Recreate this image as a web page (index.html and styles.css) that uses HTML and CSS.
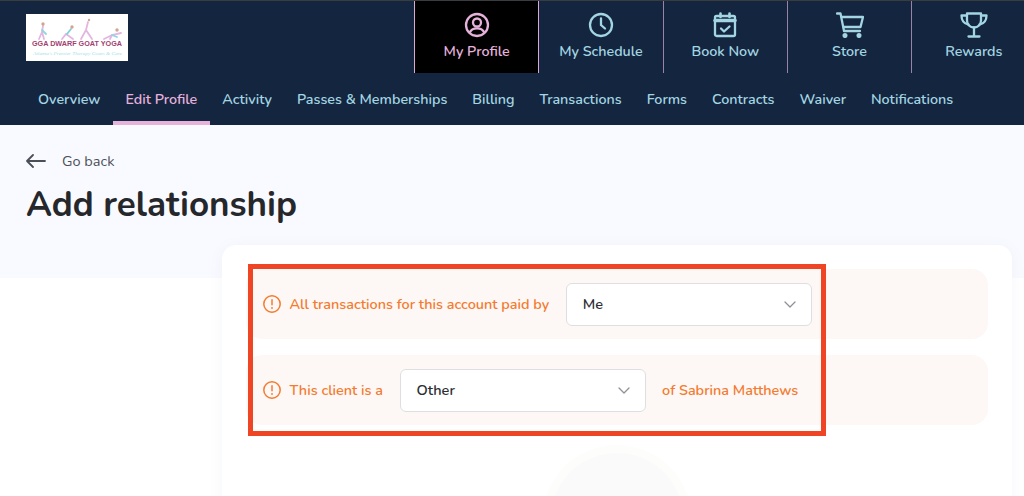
FILE: index.html
```html
<!DOCTYPE html>
<html lang="en">
<head>
<meta charset="utf-8">
<title>Add relationship</title>
<link rel="stylesheet" href="styles.css">
</head>
<body>
<header class="header">
  <div class="top">
    <a class="logo">
      <svg class="logo-art" width="102" height="47" viewBox="0 0 102 47">
        <rect width="102" height="47" fill="#fff"/>
        <g fill="none" stroke-linecap="round" stroke-width="1.800">
          <path d="M17 12 L16 18 L18 25 M16 18 L13 25" stroke="#e3b6e0"/>
          <path d="M16 16 L20 20" stroke="#8fd6de"/>
          <path d="M36 25 L40 20 L47 25" stroke="#e3b6e0"/>
          <path d="M41 20 L45 15" stroke="#7fcfd8"/>
          <path d="M62 8 L60 16 L55 25 M60 16 L66 25" stroke="#e3b6e0"/>
          <path d="M78 25 L86 21 L95 19 M86 21 L84 25" stroke="#e3b6e0"/>
          <path d="M86 21 L91 23" stroke="#8fd6de"/>
        </g>
        <g fill="#d3a590">
          <circle cx="17" cy="10" r="1.700"/><circle cx="46" cy="13" r="1.700"/><circle cx="63" cy="6" r="1.200"/><circle cx="91" cy="16" r="1.700"/>
        </g>
        <text class="logo-title" x="6" y="32" textLength="90" lengthAdjust="spacingAndGlyphs">GGA DWARF GOAT YOGA</text>
        <text class="logo-sub" x="7" y="41" textLength="89" lengthAdjust="spacingAndGlyphs">Atlanta's Premier Therapy Goats &amp; Care</text>
      </svg>
    </a>
    <nav class="tabs">
      <a class="tab tab-active">
        <svg class="tab-icon" viewBox="0 0 26 26" fill="none" stroke="currentColor" stroke-width="2.300"><circle cx="13" cy="13" r="11"/><circle cx="13" cy="10.500" r="4"/><path d="M5.800 20.500c1.200-3 4-4.200 7.200-4.200s6 1.200 7.200 4.200"/></svg>
        <span>My Profile</span>
      </a>
      <a class="tab">
        <svg class="tab-icon" viewBox="0 0 26 26" fill="none" stroke="currentColor" stroke-width="2.300" stroke-linecap="round"><circle cx="13" cy="13" r="11"/><path d="M13 6.500V13l4 3.500"/></svg>
        <span>My Schedule</span>
      </a>
      <a class="tab">
        <svg class="tab-icon" viewBox="0 0 26 26" fill="none" stroke="currentColor" stroke-width="2.300" stroke-linecap="round" stroke-linejoin="round"><rect x="3" y="4" width="20" height="20" rx="1.500"/><path d="M3 8.500h20" stroke-width="3.500"/><path d="M8.500 1.500V5M17.500 1.500V5" stroke-width="2.600"/><path d="M9 16.500l3 3 5.500-5"/></svg>
        <span>Book Now</span>
      </a>
      <a class="tab">
        <svg class="tab-icon tab-icon-wide" viewBox="0 0 28 26" fill="none" stroke="currentColor" stroke-width="2.300" stroke-linecap="round" stroke-linejoin="round"><path d="M1 1.500h3.500L8 19h16"/><path d="M5.500 5H27l-2.500 10H7.500"/><circle cx="9" cy="23.500" r="1.400" fill="currentColor"/><circle cx="23" cy="23.500" r="1.400" fill="currentColor"/></svg>
        <span>Store</span>
      </a>
      <a class="tab">
        <svg class="tab-icon tab-icon-wide" viewBox="0 0 28 26" fill="none" stroke="currentColor" stroke-width="2.300" stroke-linecap="round" stroke-linejoin="round"><path d="M7 1.500h14v7c0 4-3 7-7 7s-7-3-7-7z"/><path d="M7 3.500H1.500c0 5 1.500 8 7 9M21 3.500h5.500c0 5-1.500 8-7 9"/><path d="M14 15.500V24M8.500 24.500h11"/></svg>
        <span>Rewards</span>
      </a>
    </nav>
  </div>
  <nav class="subnav">
    <a class="subnav-item">Overview</a>
    <a class="subnav-item subnav-active">Edit Profile</a>
    <a class="subnav-item">Activity</a>
    <a class="subnav-item">Passes &amp; Memberships</a>
    <a class="subnav-item">Billing</a>
    <a class="subnav-item">Transactions</a>
    <a class="subnav-item">Forms</a>
    <a class="subnav-item">Contracts</a>
    <a class="subnav-item">Waiver</a>
    <a class="subnav-item">Notifications</a>
  </nav>
</header>
<section class="hero">
  <a class="back">
    <svg width="20" height="14" viewBox="0 0 20 14" fill="none" stroke="#4b4f57" stroke-width="1.800" stroke-linecap="round" stroke-linejoin="round"><path d="M1 7h18M7 1L1 7l6 6"/></svg>
    <span>Go back</span>
  </a>
  <h1 class="title">Add relationship</h1>
</section>
<main class="card">
  <div class="notice">
    <svg class="alert" viewBox="0 0 18 18" fill="none" stroke="#f47b2f" stroke-width="1.500" stroke-linecap="round"><circle cx="9" cy="9" r="8.200"/><path d="M9 4.800v5"/><path d="M9 13v.1" stroke-width="1.800"/></svg>
    <span>All transactions for this account paid by</span>
    <div class="select"><span>Me</span><svg class="chev" viewBox="0 0 12 7" fill="none" stroke="#8d9096" stroke-width="1.300" stroke-linecap="round" stroke-linejoin="round"><path d="M1 1l5 5 5-5"/></svg></div>
  </div>
  <div class="notice">
    <svg class="alert" viewBox="0 0 18 18" fill="none" stroke="#f47b2f" stroke-width="1.500" stroke-linecap="round"><circle cx="9" cy="9" r="8.200"/><path d="M9 4.800v5"/><path d="M9 13v.1" stroke-width="1.800"/></svg>
    <span>This client is a</span>
    <div class="select"><span>Other</span><svg class="chev" viewBox="0 0 12 7" fill="none" stroke="#8d9096" stroke-width="1.300" stroke-linecap="round" stroke-linejoin="round"><path d="M1 1l5 5 5-5"/></svg></div>
    <span>of Sabrina Matthews</span>
  </div>
  <div class="avatar-ring"><div class="avatar"></div></div>
  <div class="highlight"></div>
</main>
</body>
</html>
```
FILE: styles.css
```css
* { box-sizing: border-box; }
html, body { margin: 0; height: 496px; overflow: hidden; background: #fff; }
body { font-family: "Nunito", "Lato", "Noto Sans", sans-serif; color: #25272b; }
.header { background: #14253f; border-top: 1px solid #3a3d40; overflow: hidden; }
.top { display: flex; height: 72px; }
.logo { margin: 13px 0 0 26px; width: 102px; height: 47px; flex: none; }
.logo-art { display: block; }
.logo-title { font: 700 7px "Liberation Sans", sans-serif; fill: #a23e72; }
.logo-sub { font: italic 5px "Liberation Serif", serif; fill: #a5dfea; }
.tabs { display: flex; margin-left: 286px; flex: none; }
.tab { width: 124.300px; display: flex; flex-direction: column; align-items: center; border-left: 1px solid #9a83a6; color: #a3d5e2; font-size: 14.300px; font-weight: 600; padding-top: 11px; gap: 4px; line-height: 20px; }
.tab-icon { width: 26px; height: 26px; }
.tab-icon-wide { width: 28px; }
.tab-active { background: #000; color: #e6b2dc; border-left-color: #dba8d3; }
.tab-active + .tab { border-left-color: #dba8d3; }
.subnav { display: flex; height: 52px; padding-left: 25.500px; }
.subnav-item { padding: 2px 12.500px 0; color: #a3d5e2; font-size: 14.300px; font-weight: 600; line-height: 50px; height: 52px; }
.subnav-active { color: #e6b2dc; border-bottom: 4px solid #e6b2dc; }
.hero { height: 153px; background: #f9faff; padding: 26px 26px 0; }
.back { display: flex; align-items: center; gap: 16px; color: #4b4f57; font-size: 14.500px; line-height: 20px; }
.title { margin: 11px 0 0; font-size: 35px; line-height: 46px; font-weight: 700; color: #25272b; }
.card { position: relative; margin: -33px 12px 0 222px; height: 300px; padding: 24px; background: #fff; border-radius: 14px; box-shadow: 0 2px 14px rgba(120, 130, 170, .07); display: flex; flex-direction: column; gap: 16px; }
.notice { height: 70px; flex: none; display: flex; align-items: center; gap: 16.500px; padding: 0 17px; background: #fdf8f5; border-radius: 16px; color: #f47b2f; font-size: 14.400px; font-weight: 600; }
.notice .alert + span { margin-left: -8px; }
.alert { width: 18px; height: 18px; flex: none; }
.select { width: 246px; height: 43px; flex: none; display: flex; align-items: center; justify-content: space-between; padding: 0 15px 0 16px; background: #fff; border: 1.500px solid #dfdfe2; border-radius: 6px; color: #2c2e33; font-size: 14.500px; }
.chev { width: 12px; height: 7px; }
.avatar-ring { width: 148px; height: 148px; flex: none; margin: 4px auto 0; padding: 8px; border-radius: 50%; background: #fdfdfb; }
.avatar { width: 100%; height: 100%; border-radius: 50%; background: #fafafa; }
.highlight { position: absolute; left: 26px; top: 19px; width: 578px; height: 172px; border: 5px solid #f04525; pointer-events: none; }
```
